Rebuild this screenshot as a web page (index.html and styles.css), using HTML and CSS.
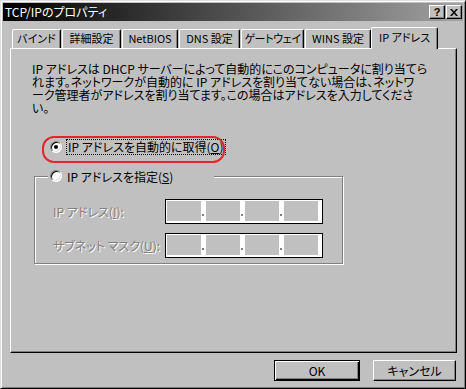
FILE: index.html
```html
<!DOCTYPE html>
<html lang="ja">
<head>
  <meta charset="UTF-8">
  <title>TCP/IPのプロパティ</title>
  <link rel="stylesheet" href="styles.css">
</head>
<body>
  <div class="window">
    <!-- タイトルバー -->
    <div class="titlebar">
      <span class="title">TCP/IPのプロパティ</span>
      <div class="title-buttons">
        <span class="tb-btn help">?</span>
        <span class="tb-btn close">
          <svg width="8" height="7" viewBox="0 0 8 7"><path d="M0 0h2l2 2.5L6 0h2L5 3.5 8 7H6L4 4.5 2 7H0l3-3.5z" fill="#000"/></svg>
        </span>
      </div>
    </div>

    <div class="dialog-body">
      <!-- タブ -->
      <div class="tabs">
        <div class="tab">バインド</div>
        <div class="tab">詳細設定</div>
        <div class="tab">NetBIOS</div>
        <div class="tab">DNS 設定</div>
        <div class="tab">ゲートウェイ</div>
        <div class="tab">WINS 設定</div>
        <div class="tab active">IP アドレス</div>
      </div>

      <!-- IP アドレス ページ -->
      <div class="panel">
        <p class="intro">IP アドレスは DHCP サーバーによって自動的にこのコンピュータに割り当てら<br>れます。ネットワークが自動的に IP アドレスを割り当てない場合は、ネットワ<br>ーク管理者がアドレスを割り当てます。この場合はアドレスを入力してくださ<br>い。</p>

        <div class="radio-row marked">
          <span class="radio checked"></span>
          <span class="focus-label">IP アドレスを自動的に取得(<u>O</u>)</span>
        </div>

        <fieldset class="group">
          <legend><span class="radio"></span><span>IP アドレスを指定(<u>S</u>)</span></legend>
          <div class="field-row">
            <span class="field-label">IP アドレス(<u>I</u>):</span>
            <div class="ip-box">
              <span class="seg"></span><span class="gap"><i></i></span>
              <span class="seg"></span><span class="gap"><i></i></span>
              <span class="seg"></span><span class="gap"><i></i></span>
              <span class="seg"></span>
            </div>
          </div>
          <div class="field-row">
            <span class="field-label">サブネット マスク(<u>U</u>):</span>
            <div class="ip-box">
              <span class="seg"></span><span class="gap"><i></i></span>
              <span class="seg"></span><span class="gap"><i></i></span>
              <span class="seg"></span><span class="gap"><i></i></span>
              <span class="seg"></span>
            </div>
          </div>
        </fieldset>
      </div>

      <!-- ボタン -->
      <div class="actions">
        <span class="btn default">OK</span>
        <span class="btn">キャンセル</span>
      </div>
    </div>
  </div>
</body>
</html>
```

FILE: styles.css
```css
* {
  box-sizing: border-box;
}
body {
  margin: 0;
  background: #c0c0c0;
  font-family: "Noto Sans CJK JP", "Noto Sans", sans-serif;
  font-size: 12px;
  font-feature-settings: "palt";
  color: #000;
}
.window {
  width: 466px;
  height: 389px;
  padding: 2px;
  background: #c0c0c0;
  border: 1px solid;
  border-color: #dfdfdf #000 #000 #dfdfdf;
  box-shadow: inset 1px 1px #fff, inset -1px -1px #808080;
}
/* タイトルバー */
.titlebar {
  height: 18px;
  display: flex;
  align-items: center;
  justify-content: space-between;
  padding: 0 1px 0 2px;
  background: linear-gradient(90deg, #000, #a2a2a2);
  color: #fff;
}
.title {
  line-height: 18px;
}
.title-buttons {
  display: flex;
  gap: 1px;
}
.tb-btn {
  width: 16px;
  height: 14px;
  display: flex;
  align-items: center;
  justify-content: center;
  background: #c0c0c0;
  border: 1px solid;
  border-color: #fff #000 #000 #fff;
  box-shadow: inset -1px -1px #808080;
  color: #000;
  font-family: "Liberation Sans", sans-serif;
  font-weight: bold;
  font-size: 11px;
  line-height: 1;
}
.dialog-body {
  padding: 6px 6px 0 7px;
}
/* タブ */
.tabs {
  display: flex;
  align-items: flex-end;
  height: 21px;
  padding-left: 2px;
}
.tab {
  flex: none;
  height: 19px;
  margin-right: 1px;
  border: 1px solid;
  border-bottom: none;
  border-color: #fff #000 #000 #fff;
  border-radius: 2px 2px 0 0;
  box-shadow: inset -1px 0 #808080;
  text-align: center;
  font-size: 11px;
  line-height: 17px;
  white-space: nowrap;
}
.tab:nth-child(1) { width: 49px; }
.tab:nth-child(2) { width: 59px; }
.tab:nth-child(3) { width: 56px; }
.tab:nth-child(4) { width: 61px; }
.tab:nth-child(5) { width: 63px; letter-spacing: -0.4px; }
.tab:nth-child(6) { width: 66px; margin-right: 0; }
.tab.active {
  width: 67px;
  height: 22px;
  margin-bottom: -1px;
  position: relative;
  z-index: 1;
  background: #c0c0c0;
  line-height: 18px;
}
/* ページ */
.panel {
  width: 447px;
  height: 305px;
  padding: 13px 0 0 21px;
  border: 1px solid;
  border-color: #fff #000 #000 #fff;
  box-shadow: inset -1px -1px #808080;
}
.intro {
  margin: 0;
  line-height: 13px;
  white-space: nowrap;
}
.radio-row {
  display: flex;
  align-items: center;
  gap: 4px;
  margin: 25px 0 0 18px;
  height: 16px;
  width: max-content;
}
/* 赤い丸印 */
.radio-row.marked {
  position: relative;
}
.radio-row.marked::before {
  content: "";
  position: absolute;
  left: -8px;
  top: -3px;
  width: 179px;
  height: 23px;
  border: 2px solid #e3262c;
  border-radius: 12px;
}
.radio {
  flex: none;
  width: 12px;
  height: 12px;
  border-radius: 50%;
  background: #fff;
  border: 1px solid;
  border-color: #808080 #fff #fff #808080;
  box-shadow: inset 1px 1px #000, inset -1px -1px #dfdfdf;
  display: flex;
  align-items: center;
  justify-content: center;
}
.radio.checked::after {
  content: "";
  width: 4px;
  height: 4px;
  border-radius: 50%;
  background: #000;
}
.focus-label {
  border: 1px dotted #000;
  padding: 0 1px;
  line-height: 14px;
}
/* グループ */
.group {
  margin: 13px 0 0 2px;
  width: 309px;
  padding: 15px 0 5px 13px;
  border: 1px solid #808080;
  box-shadow: 1px 1px #fff, inset 1px 1px #fff;
}
.group legend {
  display: flex;
  align-items: center;
  gap: 5px;
  height: 16px;
  padding: 0 41px 0 2px;
  background: #c0c0c0;
}
.field-row {
  display: flex;
  align-items: center;
  padding-left: 5px;
}
.field-row + .field-row {
  margin-top: 9px;
}
.field-label {
  width: 112px;
  color: #808080;
  text-shadow: 1px 1px #fff;
  white-space: nowrap;
}
.ip-box {
  display: flex;
  width: 158px;
  height: 25px;
  padding: 1px 4px 2px 1px;
  background: #fff;
  border: 1px solid #000;
}
.seg {
  width: 34px;
  background: #c0c0c0;
}
.gap {
  width: 5px;
  display: flex;
  align-items: flex-end;
  padding: 0 0 5px 1px;
}
.gap i {
  width: 2px;
  height: 2px;
  background: #808080;
}
/* ボタン */
.actions {
  display: flex;
  justify-content: flex-end;
  gap: 13px;
  margin-top: 7px;
  padding-right: 1px;
}
.btn {
  width: 83px;
  height: 21px;
  display: flex;
  align-items: center;
  justify-content: center;
  border: 1px solid;
  border-color: #fff #000 #000 #fff;
  box-shadow: inset -1px -1px #808080;
}
.btn.default {
  width: 86px;
  border-color: #000;
  box-shadow: inset 1px 1px #fff, inset -1px -1px #000, inset -2px -2px #808080;
}
```
